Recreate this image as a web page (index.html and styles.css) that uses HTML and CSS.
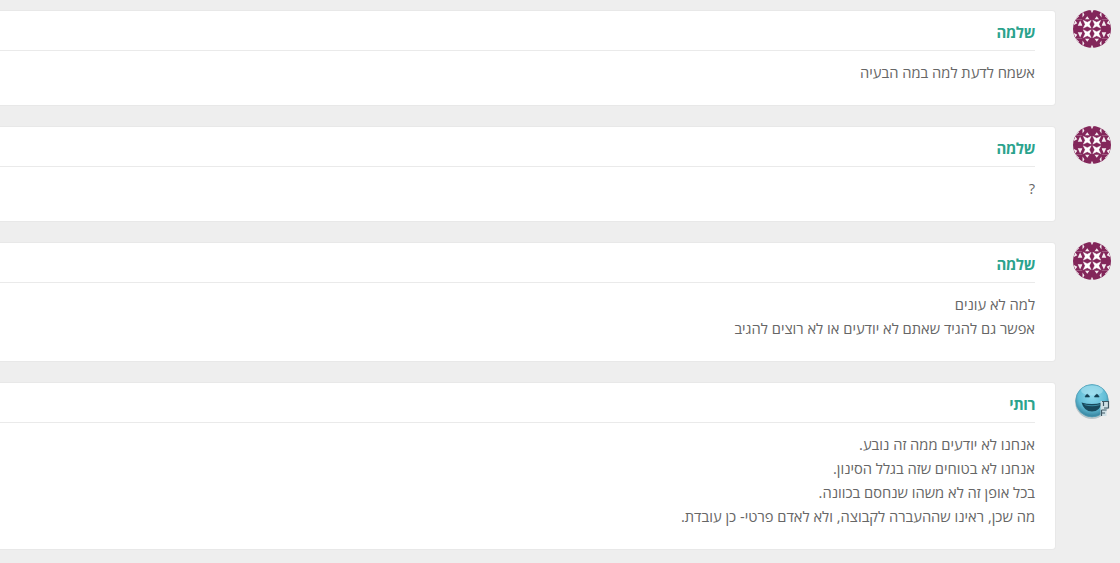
FILE: index.html
```html
<!DOCTYPE html>
<html lang="he" dir="rtl">
<head>
  <meta charset="UTF-8" />
  <title>תגובות</title>
  <link rel="stylesheet" href="styles.css">
</head>
<body>
  <svg width="0" height="0" class="defs">
    <defs>
      <clipPath id="circle"><circle cx="20" cy="20" r="20" /></clipPath>
      <g id="star">
        <rect width="10.1" height="10.1" fill="#83265a" />
        <path d="M0.8 0.8 L5 2.8 L9.2 0.8 L7.2 5 L9.2 9.2 L5 7.2 L0.8 9.2 L2.8 5 Z" fill="#fff" stroke="#fff" stroke-width="0.4" />
      </g>
      <g id="quarter">
        <rect width="20.1" height="20.1" fill="#83265a" />
        <path d="M0 0 H10 L5 5 L10 10 H5 L0 10 Z" fill="#eee5ea" />
        <path d="M3 10 L10 3 V10 Z" fill="#83265a" />
        <path d="M12.5 10 L15 6.5 L17.5 10 Z M18.3 0 H20.1 V3.5 Z M10 1 L12 5 L10 8 Z" fill="#f4ebf0" />
        <path d="M5 16.5 L7.5 11 L10 16.5 Z M0.5 16 L2.5 11 L4.5 14 Z" fill="#f4ebf0" />
        <use href="#star" x="10" y="10" />
      </g>
      <symbol id="identicon" viewBox="0 0 40 40">
        <g clip-path="url(#circle)">
          <use href="#quarter" />
          <use href="#quarter" transform="translate(40 0) scale(-1 1)" />
          <use href="#quarter" transform="translate(0 40) scale(1 -1)" />
          <use href="#quarter" transform="translate(40 40) scale(-1 -1)" />
        </g>
      </symbol>
      <radialGradient id="face" cx="50%" cy="35%" r="65%">
        <stop offset="0" stop-color="#8edaee" />
        <stop offset="0.65" stop-color="#62bdd6" />
        <stop offset="1" stop-color="#347f9a" />
      </radialGradient>
    </defs>
  </svg>

  <div class="comments">
    <div class="comment">
      <svg class="avatar"><use href="#identicon" /></svg>
      <div class="box">
        <div class="author">שלמה</div>
        <div class="text">אשמח לדעת למה במה הבעיה</div>
      </div>
    </div>

    <div class="comment">
      <svg class="avatar"><use href="#identicon" /></svg>
      <div class="box">
        <div class="author">שלמה</div>
        <div class="text">?</div>
      </div>
    </div>

    <div class="comment">
      <svg class="avatar"><use href="#identicon" /></svg>
      <div class="box">
        <div class="author">שלמה</div>
        <div class="text">למה לא עונים<br>אפשר גם להגיד שאתם לא יודעים או לא רוצים להגיב</div>
      </div>
    </div>

    <div class="comment">
      <svg class="avatar" viewBox="0 0 38 38">
        <ellipse cx="19" cy="20" rx="17" ry="17" fill="#b9c6ca" />
        <circle cx="19" cy="18.7" r="16.2" fill="url(#face)" stroke="#4e9eb8" stroke-width="0.8" />
        <ellipse cx="19" cy="8.5" rx="11" ry="5" fill="#b5e8f4" opacity="0.5" />
        <path d="M12 15 Q14.2 9.5 16.6 15 Z M21.4 15 Q23.8 9.5 26.2 15 Z" fill="#153f52" stroke="#153f52" stroke-width="0.6" />
        <path d="M8.5 20.5 Q19 23.5 29 20.5 Q27 29.5 19 29.5 Q11 29.5 8.5 20.5 Z" fill="#18495c" />
        <path d="M11 22.3 Q19 24.3 27 22.3 L26.5 23.3 Q19 25.3 12 23.3 Z" fill="#3d8ea5" />
        <path d="M27.5 19 H35.5 V26 H33.5 V34 H27.5 Z" fill="#cfe0e6" />
        <path d="M29 19.5 H35.5 V26 H31 M30.5 20 V24 M28.5 28 H33.5 M28.5 28 V34 M28.5 31 H32" fill="none" stroke="#3f5864" stroke-width="1.2" />
      </svg>
      <div class="box">
        <div class="author">רותי</div>
        <div class="text">אנחנו לא יודעים ממה זה נובע.<br>אנחנו לא בטוחים שזה בגלל הסינון.<br>בכל אופן זה לא משהו שנחסם בכוונה.<br>מה שכן, ראינו שההעברה לקבוצה, ולא לאדם פרטי- כן עובדת.</div>
      </div>
    </div>
  </div>
</body>
</html>
```
FILE: styles.css
```css
body {
  margin: 0;
  background-color: #eee;
  font-family: "Open Sans", "Noto Sans", sans-serif;
  font-size: 14.7px;
  line-height: 24px;
  color: #666;
  overflow: hidden;
}
.defs {
  position: absolute;
}
.comments {
  display: flex;
  flex-direction: column;
  gap: 20px;
  padding: 10px 9px 0 0;
}
.comment {
  display: flex;
  align-items: flex-start;
  gap: 17px;
}
.avatar {
  flex: none;
  width: 38px;
  height: 38px;
}
.box {
  flex: 1;
  box-sizing: border-box;
  padding-right: 20px;
  background-color: #fff;
  border: 1px solid #e8e8e8;
  border-left: none;
  border-radius: 0 4px 4px 0;
}
.author {
  height: 39px;
  line-height: 43px;
  border-bottom: 1px solid #eaeaea;
  color: #2ba38d;
  font-size: 15px;
  font-weight: bold;
  letter-spacing: -0.4px;
}
.text {
  padding: 9px 0 21px;
}
```
